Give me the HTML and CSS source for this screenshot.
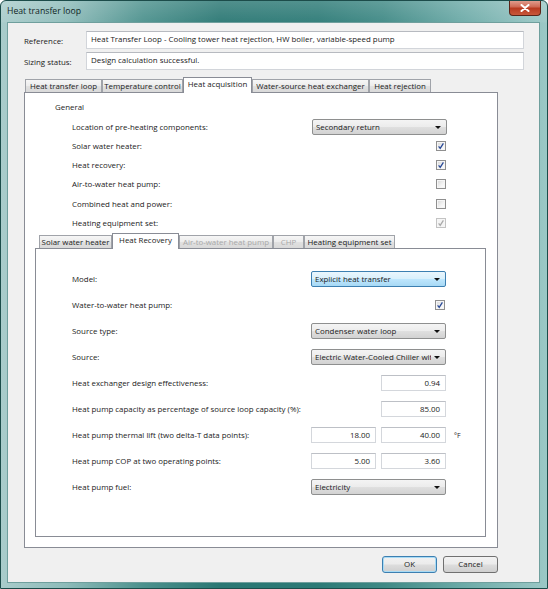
FILE: index.html
```html
<!DOCTYPE html>
<html>
<head>
<meta charset="utf-8">
<link rel="stylesheet" href="styles.css">
</head>
<body>
<div class="window">
  <div class="titlebar">
    <span class="title">Heat transfer loop</span>
    <div class="close">
      <svg width="10" height="8" viewBox="0 0 10 8"><path d="M1.5 1 L8.5 7 M8.5 1 L1.5 7" stroke="#fff" stroke-width="2" stroke-linecap="round"/></svg>
    </div>
  </div>
  <div class="client">
    <div class="field-row">
      <span class="field-label">Reference:</span>
      <div class="textbox">Heat Transfer Loop - Cooling tower heat rejection, HW boiler, variable-speed pump</div>
    </div>
    <div class="field-row">
      <span class="field-label">Sizing status:</span>
      <div class="textbox">Design calculation successful.</div>
    </div>

    <div class="tabs outer">
      <div class="tab-strip">
        <div class="tab w-loop">Heat transfer loop</div>
        <div class="tab w-temp">Temperature control</div>
        <div class="tab w-acq selected">Heat acquisition</div>
        <div class="tab w-wshx">Water-source heat exchanger</div>
        <div class="tab w-rej">Heat rejection</div>
      </div>
      <div class="tab-panel outer-panel">
        <div class="group-title">General</div>
        <div class="grid outer-grid">
          <span class="lbl">Location of pre-heating components:</span>
          <div class="ctl"><div class="combo">Secondary return<span class="arrow"></span></div></div>

          <span class="lbl">Solar water heater:</span>
          <div class="ctl"><span class="check on"><svg viewBox="0 0 8 8"><path d="M1.6 4.4 L3.2 6.3 L6.4 1.4"/></svg></span></div>

          <span class="lbl">Heat recovery:</span>
          <div class="ctl"><span class="check on"><svg viewBox="0 0 8 8"><path d="M1.6 4.4 L3.2 6.3 L6.4 1.4"/></svg></span></div>

          <span class="lbl">Air-to-water heat pump:</span>
          <div class="ctl"><span class="check"></span></div>

          <span class="lbl">Combined heat and power:</span>
          <div class="ctl"><span class="check"></span></div>

          <span class="lbl">Heating equipment set:</span>
          <div class="ctl"><span class="check on disabled"><svg viewBox="0 0 8 8"><path d="M1.6 4.4 L3.2 6.3 L6.4 1.4"/></svg></span></div>
        </div>

        <div class="tabs inner">
          <div class="tab-strip">
            <div class="tab w-solar">Solar water heater</div>
            <div class="tab w-hr selected">Heat Recovery</div>
            <div class="tab w-awhp disabled">Air-to-water heat pump</div>
            <div class="tab w-chp disabled">CHP</div>
            <div class="tab w-hes">Heating equipment set</div>
          </div>
          <div class="tab-panel inner-panel">
            <div class="grid inner-grid">
              <span class="lbl">Model:</span>
              <div class="ctl"><div class="combo focused">Explicit heat transfer<span class="arrow"></span></div></div>
              <span></span>

              <span class="lbl">Water-to-water heat pump:</span>
              <div class="ctl"><span class="check on"><svg viewBox="0 0 8 8"><path d="M1.6 4.4 L3.2 6.3 L6.4 1.4"/></svg></span></div>
              <span></span>

              <span class="lbl">Source type:</span>
              <div class="ctl"><div class="combo">Condenser water loop<span class="arrow"></span></div></div>
              <span></span>

              <span class="lbl">Source:</span>
              <div class="ctl"><div class="combo"><span class="clip">Electric Water-Cooled Chiller with</span><span class="arrow"></span></div></div>
              <span></span>

              <span class="lbl">Heat exchanger design effectiveness:</span>
              <div class="ctl"><div class="num">0.94</div></div>
              <span></span>

              <span class="lbl">Heat pump capacity as percentage of source loop capacity (%):</span>
              <div class="ctl"><div class="num">85.00</div></div>
              <span></span>

              <span class="lbl">Heat pump thermal lift (two delta-T data points):</span>
              <div class="ctl pair"><div class="num">18.00</div><div class="num">40.00</div></div>
              <span class="unit">°F</span>

              <span class="lbl">Heat pump COP at two operating points:</span>
              <div class="ctl pair"><div class="num">5.00</div><div class="num">3.60</div></div>
              <span></span>

              <span class="lbl">Heat pump fuel:</span>
              <div class="ctl"><div class="combo">Electricity<span class="arrow"></span></div></div>
              <span></span>
            </div>
          </div>
        </div>
      </div>
    </div>

    <div class="buttons">
      <div class="btn default">OK</div>
      <div class="btn">Cancel</div>
    </div>
  </div>
</div>
</body>
</html>
```
FILE: styles.css
```css
html, body {
  margin: 0;
  padding: 0;
  background: #ffffff;
}
body {
  font-family: "Open Sans", "Noto Sans", sans-serif;
  font-size: 7.9px;
  color: #1b1b1b;
}
.window {
  width: 548px;
  height: 589px;
  box-sizing: border-box;
  border: 1px solid #1c4c4a;
  border-radius: 6px 6px 0 0;
  background:
    linear-gradient(to bottom, rgba(255,255,255,0.18) 0px, rgba(255,255,255,0.05) 21px, rgba(0,0,0,0) 22px),
    linear-gradient(to right, #a9cccb 0%, #8dbbb9 12%, #4c918d 26%, #2a7773 40%, #2c7a76 58%, #3f8985 70%, #6aa9a6 84%, #9cc8c6 100%);
  display: flex;
  flex-direction: column;
  overflow: hidden;
}
.titlebar {
  height: 21px;
  display: flex;
  align-items: flex-start;
  padding-left: 6px;
  flex: none;
}
.title {
  font-size: 8.7px;
  color: #0f1e1e;
  line-height: 21px;
}
.close {
  margin-left: auto;
  margin-right: 6px;
  margin-top: -1px;
  width: 32px;
  height: 16px;
  box-sizing: border-box;
  border: 1px solid #5b2418;
  border-top: none;
  border-radius: 0 0 4px 4px;
  background: linear-gradient(to bottom, #e3a496 0%, #cf6a55 45%, #b83a20 55%, #c8573a 100%);
  display: flex;
  align-items: center;
  justify-content: center;
}
.close svg { display: block; }

.client {
  flex: 1;
  margin: 0 7px 5px 6px;
  border: 1px solid #6f9f9d;
  background: #f0f0f0;
  padding: 8px 15px 0 16px;
  display: flex;
  flex-direction: column;
}
.field-row {
  display: grid;
  grid-template-columns: 62px 1fr;
  align-items: center;
  height: 18px;
  margin-bottom: 3px;
}
.field-label { padding-top: 1px; }
.textbox {
  height: 18px;
  box-sizing: border-box;
  background: #fff;
  border: 1px solid #d2d5da;
  border-top-color: #b7bac0;
  padding: 0 4px;
  line-height: 15px;
  white-space: nowrap;
  overflow: hidden;
}

.tabs.outer {
  margin-top: 4px;
  margin-right: 26px;
  display: flex;
  flex-direction: column;
}
.tab-strip {
  display: flex;
  align-items: flex-end;
  height: 16px;
  position: relative;
  z-index: 2;
}
.tabs.outer > .tab-strip { padding-left: 1px; }
.tabs.inner > .tab-strip { padding-left: 4px; }
.tab {
  height: 13px;
  margin-bottom: 1px;
  box-sizing: border-box;
  border: 1px solid #a0a3a9;
  border-bottom: none;
  background: linear-gradient(to bottom, #f6f6f6 0%, #ececec 50%, #e1e1e1 51%, #d9d9d9 100%);
  padding: 0;
  line-height: 12px;
  text-align: center;
  white-space: nowrap;
  overflow: hidden;
}
.tab.selected {
  height: 16px;
  margin-bottom: 0;
  background: #ffffff;
  border-color: #898c95;
  line-height: 13px;
  position: relative;
  z-index: 3;
}
.tab.disabled { color: #a9a9a9; }
.w-loop { width: 77px; }
.w-temp { width: 81px; }
.w-acq { width: 69px; }
.w-wshx { width: 117px; }
.w-rej { width: 62px; }
.w-solar { width: 73px; }
.w-hr { width: 67px; }
.w-awhp { width: 94px; }
.w-chp { width: 31px; }
.w-hes { width: 91px; }

.tab-panel {
  background: #ffffff;
  border: 1px solid #898c95;
  margin-top: -1px;
  position: relative;
  z-index: 1;
}
.outer-panel {
  height: 456px;
  box-sizing: border-box;
  padding: 5px 0 0 0;
}
.group-title {
  height: 19.2px;
  line-height: 19.2px;
  padding-left: 30px;
  box-sizing: border-box;
}
.grid {
  display: grid;
  align-items: center;
}
.outer-grid {
  grid-template-columns: 1fr 135px;
  grid-auto-rows: 19.2px;
  padding-left: 47px;
  padding-right: 50px;
}
.lbl { white-space: nowrap; }
.ctl {
  display: flex;
  justify-content: flex-end;
  align-items: center;
}
.combo {
  width: 135px;
  height: 16px;
  box-sizing: border-box;
  border: 1px solid #8e8f8f;
  border-radius: 2px;
  background: linear-gradient(to bottom, #f4f4f4 0%, #ececec 48%, #dfdfdf 52%, #d2d2d2 100%);
  padding: 0 14px 0 3px;
  line-height: 14px;
  position: relative;
  white-space: nowrap;
  overflow: hidden;
}
.combo.focused {
  border-color: #3c7fb1;
  background: linear-gradient(to bottom, #eaf6fd 0%, #d9f0fc 48%, #bee6fd 52%, #a7d9f5 100%);
}
.clip { display: block; overflow: hidden; }
.arrow {
  position: absolute;
  right: 5px;
  top: 6px;
  width: 0;
  height: 0;
  border-left: 3px solid transparent;
  border-right: 3px solid transparent;
  border-top: 3px solid #111;
}
.check {
  width: 10px;
  height: 10px;
  box-sizing: border-box;
  border: 1px solid #8f8f8f;
  background: linear-gradient(135deg, #d6d6d6 0%, #f4f4f4 60%, #ffffff 100%);
  box-shadow: inset 0 0 0 1px #f6f6f6;
  display: flex;
  align-items: center;
  justify-content: center;
  margin-right: 1px;
}
.check svg {
  width: 8px;
  height: 8px;
  display: block;
}
.check svg path {
  fill: none;
  stroke: #2b4b98;
  stroke-width: 1.3;
}
.check.disabled {
  border-color: #c3c3c3;
  background: #f4f4f4;
}
.check.disabled svg path { stroke: #aaaaaa; }

.tabs.inner {
  margin: 1px 11px 0 10px;
  display: flex;
  flex-direction: column;
}
.inner-panel {
  height: 289px;
  box-sizing: border-box;
  padding-top: 17px;
}
.inner-grid {
  grid-template-columns: 1fr 135px 39px;
  grid-auto-rows: 26px;
  padding-left: 36px;
}
.num {
  width: 65px;
  height: 16px;
  box-sizing: border-box;
  background: #fff;
  border: 1px solid #d4d7dc;
  border-top-color: #bdc0c6;
  text-align: right;
  padding-right: 5px;
  line-height: 14px;
}
.pair { gap: 5px; }
.unit { padding-left: 8px; font-size: 7px; }

.buttons {
  display: flex;
  justify-content: flex-end;
  gap: 6px;
  margin-top: 8px;
  margin-right: 26px;
}
.btn {
  width: 55px;
  height: 17px;
  box-sizing: border-box;
  border: 1px solid #707070;
  border-radius: 3px;
  background: linear-gradient(to bottom, #f2f2f2 0%, #ebebeb 48%, #dddddd 52%, #cfcfcf 100%);
  text-align: center;
  line-height: 15px;
}
.btn.default {
  border-color: #3c7fb1;
  box-shadow: inset 0 0 0 1px #a8dbf5;
}
```
